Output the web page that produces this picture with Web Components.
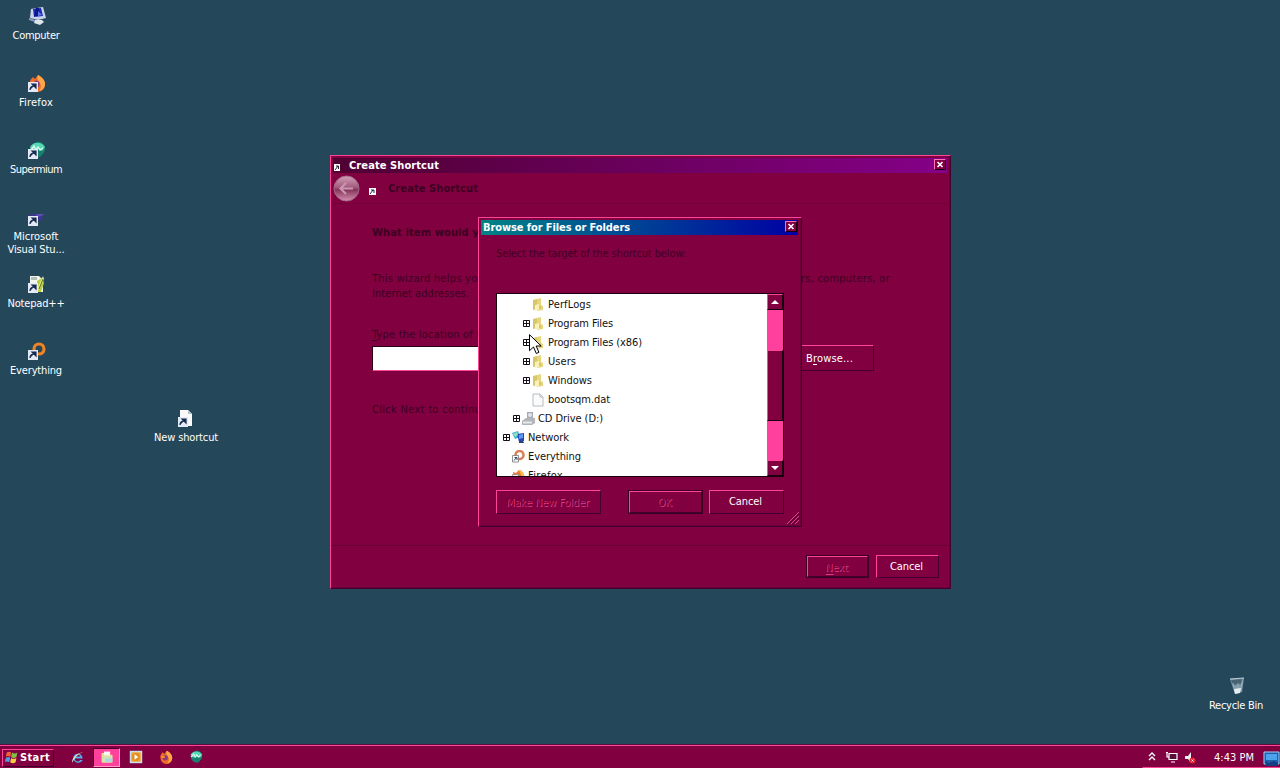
<!DOCTYPE html>
<html lang="en">
<head>
<meta charset="utf-8">
<title>Desktop</title>
<style>
  html, body { margin: 0; width: 1280px; height: 768px; overflow: hidden; }
  body {
    --face: #800040;
    --light: #ff4598;
    --dark: #400030;
    --deep: #18000f;
    font: 11px/13px "DejaVu Sans Condensed", "DejaVu Sans", "Noto Sans", sans-serif;
    font-stretch: condensed;
    color: #fff;
  }
</style>
</head>
<body>
<xp-desktop>
  <xp-shortcut slot="icons" icon="computer" label="Computer" w="47" style="left:0;top:7px"></xp-shortcut>
  <xp-shortcut slot="icons" icon="firefox" link label="Firefox" w="34" style="left:0;top:74px"></xp-shortcut>
  <xp-shortcut slot="icons" icon="supermium" link label="Supermium" w="52" style="left:0;top:141px"></xp-shortcut>
  <xp-shortcut slot="icons" icon="vs" link label="Microsoft|Visual Stu..." w="45|57" style="left:0;top:208px"></xp-shortcut>
  <xp-shortcut slot="icons" icon="notepad" link label="Notepad++" w="57" style="left:0;top:275px"></xp-shortcut>
  <xp-shortcut slot="icons" icon="everything" link label="Everything" w="52" style="left:0;top:342px"></xp-shortcut>
  <xp-shortcut slot="icons" icon="page" link label="New shortcut" w="64" style="left:150px;top:409px"></xp-shortcut>
  <xp-shortcut slot="icons" icon="bin" label="Recycle Bin" w="54" style="left:1200px;top:677px"></xp-shortcut>

  <xp-window slot="windows" caption="Create Shortcut" w="90" glyph
    style="left:330px;top:155px;width:621px;height:434px;--from:#500032;--to:#850088">
    <wizard-page></wizard-page>
  </xp-window>
  <xp-window slot="windows" caption="Browse for Files or Folders" w="147"
    style="left:478px;top:217px;width:324px;height:310px;--from:#008486;--to:#0000a4">
    <browse-page></browse-page>
  </xp-window>
  <xp-cursor slot="windows"></xp-cursor>
  <xp-taskbar slot="bar"></xp-taskbar>
</xp-desktop>

<script>
const folder = '<path d="M1 2l4-1v10l-4 1z" fill="#d8c66a"/><path d="M5 1l4-1v7l2 1v4l-6 1z" fill="#e6d77e"/><path d="M3 7l4-1v6l-4 .5z" fill="#f8f2b8"/><path d="M8 8v3" stroke="#c9b452"/>';
const firefox = '<path d="M5 3l2 2 3-4c4 2 7 5 7 9a7.500 7.500 0 01-15 1c-1-4 1-6 3-8z" fill="#f06b25"/><path d="M10 1c4 2 7 5 7 9 0 4-3 7-6 7 3-4 2-7 0-9-2-3-2-5-1-7z" fill="#ffa648"/><circle cx="8" cy="10" r="3.500" fill="#8a3b7f"/><path d="M3 8c2-1 4-1 5 1-1 1-2 2-5 1z" fill="#ff8c2e"/>';
const supermium = '<path d="M9 1c5-1 8 3 8 7 0 3-2 5-5 8-6 1-9-3-10-7 1-4 3-7 7-8z" fill="#18806f"/><path d="M2 6c3-5 11-6 15 0l-3 4-3-2-3 2-5-1z" fill="#58d7b4"/><path d="M3 9l3-4 2 4 2-3 2 3 3-2" stroke="#e0fff5" stroke-width="1.300" fill="none"/>';

// Every glyph is drawn on an 18 unit grid, except the small tree ones (14).
const GLYPHS = {
  computer: '<path d="M3 2l12-2 3 11-8 2-8-2z" fill="#c9d3ee"/><path d="M5 2l8-1 2 8-9 1z" fill="#1c2cb0"/><path d="M8 1h3l1 8H6z" fill="#0d168c"/><path d="M10 4l4 4-4 1z" fill="#5d7de8"/><path d="M7 13h7l2 2-4 3-6-2z" fill="#dfe3ea"/><path d="M1 11l6 2v2l-6-2z" fill="#8fa0c8"/>',
  firefox, supermium,
  vs: '<path d="M2 6h15l-3 2.500 1 4h-4l-3-2-6 2z" fill="#3d3490"/><path d="M8 6h8l-2 2-5 1z" fill="#5a4fae"/>',
  notepad: '<path d="M2 1h9l4 4v12H2z" fill="#f2f5ea"/><path d="M4 2v3M6 2v3M8 2v3" stroke="#788"/><path d="M9 6l5-3 2 5-3 9H9z" fill="#b5cf3a"/><path d="M15 1l1 3-5 11-2 1 1-4z" fill="#edea9c"/><path d="M15 4l-4 10" stroke="#5a7421"/>',
  everything: '<circle cx="11" cy="7" r="5" fill="none" stroke="#f08322" stroke-width="3.200"/><path d="M8 11l-4 5" stroke="#c85a10" stroke-width="3"/>',
  page: '<path d="M2 1h8l4 4v12H2z" fill="#fafafa"/><path d="M10 1v4h4z" fill="#b8c4cc"/>',
  bin: '<path d="M2 2l14-1-2 14-7 2z" fill="#7f9aa9"/><path d="M3 3l11-1-1 5-8 1z" fill="#486373"/><path d="M5 6l2 9M10 6v9M14 5l-1 9" stroke="#93adb9"/><path d="M6 12l7-1-1 5-5 1z" fill="#e4eef2"/><path d="M2 2l14-1" stroke="#bccdd5"/>',
  ie: '<path d="M14.500 11H5c0 4 5 5 7 2h3c-3 6-12 4-12-3 0-6 11-8 12 1z" fill="#52aeee"/><path d="M6 8.500h6c-1-3-5-3-6 0z" fill="#800040"/><path d="M2 16c-3-5 9-15 15-13-4-1-12 5-15 13z" fill="#e9e6b2"/>',
  explorer: '<path d="M2 4h6l1 2h7v10H2z" fill="#e7dc90"/><path d="M5 2h8v5H5z" fill="#f8f8ee"/><path d="M3 8h13l-1 8H3z" fill="#d3e3b1"/><path d="M7 11h9v4H7z" fill="#a8d4e4"/>',
  player: '<path d="M1 1h16v16H1z" fill="#c8ddea"/><path d="M3 3h12v12H3z" fill="#f1a22d"/><circle cx="9" cy="9" r="5" fill="#e48b16"/><path d="M7 5.500l5 3.500-5 3.500z" fill="#fff"/>',
  flag: '<path d="M3 4q3-2 5 0l-1 5q-3-2-5 0z" fill="#ee6335"/><path d="M9 4q3 2 6 0l-1 5q-3 2-6 0z" fill="#83bf43"/><path d="M2 10q3-2 5 0l-1 5q-3-2-5 0z" fill="#519bdf"/><path d="M8 10q3 2 6 0l-1 5q-3 2-6 0z" fill="#f5cc45"/>',
  up: '<path d="M6 7l3-3 3 3M6 11l3-3 3 3" fill="none" stroke="#fff" stroke-width="1.400"/>',
  lan: '<path d="M6 4.500h8v6H6z" fill="#58103d" stroke="#fff" stroke-width="1.200"/><path d="M4 3v5h2M8 13h4M3 3.500h2" fill="none" stroke="#fff" stroke-width="1.200"/>',
  sound: '<path d="M4 7h3l3-4v11l-3-4H4z" fill="#eee"/><circle cx="11.500" cy="11.500" r="3" fill="#df2434"/><path d="M10.500 10.500l2 2m0-2l-2 2" stroke="#fff"/>',
  screen: '<path d="M2 3h15v12H2z" fill="#205fae" stroke="#a4cef4"/><path d="M4 5h11v6H4z" fill="#4ba3ee"/><path d="M3 12l4 2 5-2 4 2v3H4z" fill="#173d83"/>',
  folder,
  file: '<path d="M1 1h7l3 3v9H1z" fill="#fbfbfb" stroke="#a5adb5" stroke-width=".8"/><path d="M8 1v3h3" fill="none" stroke="#a5adb5" stroke-width=".8"/>',
  cd: '<path d="M5 0h6v7H5z" fill="#a8acb0"/><path d="M0 9l4-3h9v5l-3 2H0z" fill="#b1b4b8"/><path d="M1 9.500h9v2H1z" fill="#e6e8ea"/><circle cx="8" cy="3" r="2" fill="#dfe5ea"/>',
  net: '<path d="M0 2l6-2 2 6-5 2z" fill="#38b1cc"/><path d="M5 3l7-1v8l-5 1z" fill="#2546bd"/><path d="M7 4l4-1v4L7 8z" fill="#5f9cf0"/><path d="M7 10h4l1 2H7z" fill="#2c3f72"/><path d="M1 3l4-2 1 3-3 2z" fill="#8be0c8"/>',
  everythingSm: '<circle cx="7.500" cy="5" r="4" fill="none" stroke="#d9825c" stroke-width="2.600"/><path d="M.5 5.500h6V12h-6z" fill="#fff" stroke="#777" stroke-width=".8"/><path d="M2 10.500L4.500 7.500M2.500 7.500H5V10" stroke="#26446e" fill="none"/>',
  firefoxSm: '<path d="M1 3l3 1 3-3c4 1 6 4 5 8l-3 4H2z" fill="#ef7a38"/><path d="M7 1c4 1 6 4 5 8L9 6z" fill="#f8c050"/><path d="M.5 5.500h6V12h-6z" fill="#f5eef5" stroke="#987" stroke-width=".8"/>'
};
const SMALL = ['folder', 'file', 'cd', 'net', 'everythingSm', 'firefoxSm'];

const link = '<path d="M0 8h10v10H0z" fill="#e4eaf5"/><path d="M2 16c0-3 1-4 4-4M4 10h4v4z" fill="#182b52" stroke="#182b52" stroke-width="1.200"/>';

function glyph(name, linked) {
  const n = SMALL.includes(name) ? 14 : 18;
  return `<svg width="${n}" height="${n}" viewBox="0 0 ${n} ${n}">${GLYPHS[name]}${linked ? link : ''}</svg>`;
}

// One line of text, tracked so that it fills the width in "w".
class FitText extends HTMLElement {
  connectedCallback() {
    this.attachShadow({ mode: 'open' }).innerHTML =
      '<style>:host { display: block; flex: none; width: max-content } span { display: block; white-space: pre }</style>' +
      '<span><slot></slot></span>';
    const w = Number(this.getAttribute('w'));
    if (!w) return;
    const span = this.shadowRoot.querySelector('span');
    const n = this.textContent.length;
    span.style.letterSpacing = (w - span.getBoundingClientRect().width) / n + 'px';
  }
}

class XpDesktop extends HTMLElement {
  connectedCallback() {
    this.attachShadow({ mode: 'open' }).innerHTML = `
      <style>
        :host { display: flex; flex-direction: column; position: relative; width: 1280px; height: 768px; background: #25475a; }
        .space { flex: 1; }
      </style>
      <div class="space"><slot name="icons"></slot><slot name="windows"></slot></div>
      <slot name="bar"></slot>`;
  }
}

class XpShortcut extends HTMLElement {
  connectedCallback() {
    const widths = this.getAttribute('w').split('|');
    const lines = this.getAttribute('label').split('|');
    this.attachShadow({ mode: 'open' }).innerHTML = `
      <style>
        :host { position: absolute; display: flex; flex-direction: column; align-items: center; width: 72px; }
        svg { display: block; margin: 0 0 4px 2px; }
      </style>
      ${glyph(this.getAttribute('icon'), this.hasAttribute('link'))}
      ${lines.map((t, i) => `<fit-text w="${widths[i]}">${t}</fit-text>`).join('')}`;
  }
}

class XpWindow extends HTMLElement {
  connectedCallback() {
    this.attachShadow({ mode: 'open' }).innerHTML = `
      <style>
        :host {
          position: absolute; box-sizing: border-box; display: flex; flex-direction: column;
          background: var(--face); border: 1px solid; border-color: var(--light) var(--dark) var(--dark) var(--light);
          box-shadow: inset -2px -2px 0 -1px #69003a;
        }
        .bar {
          display: flex; align-items: center; height: 15px; margin: 2px 3px 0 2px; padding: 0 1px 0 2px;
          background: linear-gradient(90deg, var(--from), var(--to)); font-weight: bold;
        }
        .mini { margin: 4px 9px 0 -1px; display: block; }
        .close {
          box-sizing: border-box; width: 12px; height: 11px; margin: 0 0 2px auto; background: var(--face);
          border: 1px solid; border-color: #ff70b4 var(--deep) var(--deep) #ff70b4;
        }
        .close svg { display: block; }
        .content { flex: 1; display: flex; }
      </style>
      <div class="bar">
        ${this.hasAttribute('glyph') ? '<svg class="mini" width="6" height="7"><path d="M0 0h6v7H0z" fill="#fff"/><path d="M1 6l3-4M2 2h2.500v3" stroke="#223" fill="none"/></svg>' : ''}
        <fit-text w="${this.getAttribute('w')}">${this.getAttribute('caption')}</fit-text>
        <div class="close"><svg width="10" height="9"><path d="M2.500 2l5 5m0-5l-5 5" stroke="#fff" stroke-width="1.600"/></svg></div>
      </div>
      <div class="content"><slot></slot></div>`;
  }
}

class XpButton extends HTMLElement {
  connectedCallback() {
    this.attachShadow({ mode: 'open' }).innerHTML = `
      <style>
        :host {
          box-sizing: border-box; flex: none; display: flex; align-items: center; justify-content: center; padding-right: 2px;
          border: 1px solid; border-color: var(--light) var(--dark) var(--dark) var(--light);
        }
        :host([disabled]) { color: #700039; text-shadow: 1px 1px 0 #e33a84; padding-top: 1px; }
        :host([default]) { outline: 1px solid #3a0020; outline-offset: 0; }
      </style>
      <slot></slot>`;
  }
}

class WizardPage extends HTMLElement {
  connectedCallback() {
    this.attachShadow({ mode: 'open' }).innerHTML = `
      <style>
        :host { display: flex; flex-direction: column; flex: 1; color: #3c0020; }
        header { display: flex; align-items: center; height: 29px; padding: 1px 0 0 2px; border-bottom: 1px solid #740039; font-weight: bold; }
        .back { margin-right: 9px; }
        .mini { margin: 5px 12px 0 0; }
        main { flex: 1; padding: 21px 0 0 41px; line-height: 15px; }
        b { display: block; margin-bottom: 31px; }
        .type { margin-top: 26px; }
        .row { display: flex; align-items: center; height: 26px; margin: 3px 0 31px; }
        .field { box-sizing: border-box; width: 411px; height: 25px; background: #fff; border: 1px solid #28001a; border-color: #28001a var(--light) var(--light) #28001a; }
        .row xp-button { width: 84px; height: 26px; padding-right: 5px; margin-left: 7px; color: #fff; }
        u { text-underline-offset: 2px; }
        footer { display: flex; justify-content: flex-end; align-items: flex-start; gap: 8px; height: 33px; padding: 9px 11px 0 0; border-top: 1px solid #680036; }
        footer xp-button { width: 63px; height: 23px; color: #fff; }
        footer xp-button[disabled] { width: 61px; height: 21px; margin-top: 1px; color: #700039; }
      </style>
      <header>
        <svg class="back" width="27" height="27" viewBox="0 0 27 27">
          <defs><linearGradient id="g" x2="0" y2="1"><stop stop-color="#d1a0b8"/><stop offset=".45" stop-color="#a45a7d"/><stop offset=".55" stop-color="#853459"/><stop offset="1" stop-color="#d391b1"/></linearGradient></defs>
          <circle cx="13.500" cy="13.500" r="12.500" fill="url(#g)" stroke="#a56b88"/>
          <path d="M20 13.500H8m5-5.500l-5.500 5.500 5.500 5.500" fill="none" stroke="#c896b0" stroke-width="2.200"/>
        </svg>
        <svg class="mini" width="7" height="7"><path d="M0 0h7v7H0z" fill="#fff"/><path d="M1 6l3-4M2 2h3v3" stroke="#223" fill="none"/></svg>
        <fit-text w="90">Create Shortcut</fit-text>
      </header>
      <main>
        <b><fit-text w="288">What item would you like to create a shortcut for?</fit-text></b>
        <fit-text w="518">This wizard helps you to create shortcuts to local or network programs, files, folders, computers, or</fit-text>
        <fit-text w="97">Internet addresses.</fit-text>
        <fit-text class="type" w="151"><u>T</u>ype the location of the item:</fit-text>
        <div class="row"><div class="field"></div><xp-button><fit-text w="47">B<u>r</u>owse...</fit-text></xp-button></div>
        <fit-text w="119">Click Next to continue.</fit-text>
      </main>
      <footer>
        <xp-button disabled default><fit-text w="23"><u>N</u>ext</fit-text></xp-button>
        <xp-button><fit-text w="33">Cancel</fit-text></xp-button>
      </footer>`;
  }
}

class TreeRow extends HTMLElement {
  connectedCallback() {
    const level = Number(this.getAttribute('level'));
    this.attachShadow({ mode: 'open' }).innerHTML = `
      <style>
        :host { display: flex; align-items: center; height: 19px; padding-left: ${6 + level * 10}px; }
        .box { width: 7px; height: 7px; margin-right: 2px; }
        .icon { width: 16px; height: 14px; }
        svg { display: block; }
      </style>
      <div class="box">${this.hasAttribute('plus') ? '<svg width="7" height="7"><path d="M.5.5h6v6h-6zM0 3.500h7M3.500 0v7" fill="none" stroke="#181018"/></svg>' : ''}</div>
      <div class="icon">${glyph(this.getAttribute('icon'))}</div>
      <fit-text w="${this.getAttribute('w')}">${this.getAttribute('label')}</fit-text>`;
  }
}

class BrowsePage extends HTMLElement {
  connectedCallback() {
    this.attachShadow({ mode: 'open' }).innerHTML = `
      <style>
        :host { display: flex; flex-direction: column; flex: 1; padding: 12px 0 0 17px; color: #400024; }
        .list { box-sizing: border-box; display: flex; width: 288px; height: 184px; margin-top: 33px; background: #fff; color: #111; border: 1px solid #18000f; }
        .rows { box-sizing: border-box; flex: 1; height: 182px; padding-top: 1px; overflow: hidden; }
        .scroll { display: flex; flex-direction: column; width: 16px; background: #ff409c; }
        .key, .thumb { box-sizing: border-box; background: var(--face); border: 1px solid; border-color: var(--light) var(--deep) var(--deep) var(--light); }
        .key { height: 16px; display: flex; align-items: center; justify-content: center; }
        .thumb { height: 71px; margin: 40px 0 auto; }
        .buttons { display: flex; align-items: center; margin-top: 12px; height: 25px; color: #fff; }
        .grip { display: block; margin: -2px 1px 0 auto; }
      </style>
      <fit-text w="190">Select the target of the shortcut below:</fit-text>
      <div class="list">
        <div class="rows">
          <tree-row level="2" icon="folder" label="PerfLogs" w="43"></tree-row>
          <tree-row level="2" plus icon="folder" label="Program Files" w="65"></tree-row>
          <tree-row level="2" plus icon="folder" label="Program Files (x86)" w="94"></tree-row>
          <tree-row level="2" plus icon="folder" label="Users" w="28"></tree-row>
          <tree-row level="2" plus icon="folder" label="Windows" w="44"></tree-row>
          <tree-row level="2" icon="file" label="bootsqm.dat" w="62"></tree-row>
          <tree-row level="1" plus icon="cd" label="CD Drive (D:)" w="65"></tree-row>
          <tree-row level="0" plus icon="net" label="Network" w="41"></tree-row>
          <tree-row level="0" icon="everythingSm" label="Everything" w="53"></tree-row>
          <tree-row level="0" icon="firefoxSm" label="Firefox" w="35"></tree-row>
        </div>
        <div class="scroll">
          <div class="key"><svg width="8" height="4"><path d="M0 4l4-4 4 4z" fill="#fff"/></svg></div>
          <div class="thumb"></div>
          <div class="key"><svg width="8" height="4"><path d="M0 0h8L4 4z" fill="#fff"/></svg></div>
        </div>
      </div>
      <div class="buttons">
        <xp-button disabled style="width:105px;height:24px"><fit-text w="83">Make New Folder</fit-text></xp-button>
        <xp-button disabled default style="width:73px;height:22px;margin-left:28px"><fit-text w="14">OK</fit-text></xp-button>
        <xp-button style="width:75px;height:24px;margin-left:7px"><fit-text w="33">Cancel</fit-text></xp-button>
      </div>
      <svg class="grip" width="13" height="13"><path d="M0 12L12 0M4 12l8-8M8 12l4-4" stroke="#e0488c"/><path d="M1.500 12.500l11-11M5.500 12.500l7-7" stroke="#4a0028"/></svg>`;
  }
}

class XpCursor extends HTMLElement {
  connectedCallback() {
    this.attachShadow({ mode: 'open' }).innerHTML = `
      <style>:host { position: absolute; left: 529px; top: 334px; } svg { display: block; }</style>
      <svg width="14" height="22"><path d="M.5.700v16l4-3.700 2.800 6.500 2.600-1.200L7.200 12h5z" fill="#fff" stroke="#000"/></svg>`;
  }
}

class XpTaskbar extends HTMLElement {
  connectedCallback() {
    this.attachShadow({ mode: 'open' }).innerHTML = `
      <style>
        :host { box-sizing: border-box; display: flex; align-items: center; height: 24px; background: var(--face); border-top: 1px solid #58103a; box-shadow: inset 0 1px var(--light); padding: 2px 0 0 2px; }
        svg { display: block; flex: none; }
        .start { box-sizing: border-box; display: flex; align-items: center; width: 52px; height: 18px; padding-bottom: 1px; border: 1px solid; border-color: var(--light) var(--dark) var(--dark) var(--light); font-weight: bold; }
        .start svg { width: 16px; margin-left: 1px; }
        .quick { display: flex; align-items: center; margin-left: 12px; }
        .quick div { box-sizing: border-box; width: 30px; height: 19px; display: flex; justify-content: center; align-items: center; padding-bottom: 1px; }
        .quick svg { width: 14px; height: 14px; }
        .quick .on { width: 27px; margin: 0 1px 0 3px; background: #ff409c; border: 1px solid; border-color: #4c0028 #ff9cc8 #ff9cc8 #4c0028; }
        .tray { box-sizing: border-box; display: flex; align-items: center; height: 20px; margin-left: auto; border: 1px solid; border-color: transparent #400028 var(--light) transparent; border-right: 0; }
        .tray svg:first-child { margin-right: 2px; }
        .tray fit-text { margin: 0 8px 1px 15px; }
      </style>
      <div class="start">${glyph('flag')}<fit-text w="30">Start</fit-text></div>
      <div class="quick">
        <div style="width:24px">${glyph('ie')}</div><div class="on">${glyph('explorer')}</div>
        <div>${glyph('player')}</div><div>${glyph('firefox')}</div><div>${glyph('supermium')}</div>
      </div>
      <div class="tray">${glyph('up')}${glyph('lan')}${glyph('sound')}<fit-text w="40">4:43 PM</fit-text>${glyph('screen')}</div>`;
  }
}

customElements.define('fit-text', FitText);
customElements.define('xp-button', XpButton);
customElements.define('tree-row', TreeRow);
customElements.define('xp-desktop', XpDesktop);
customElements.define('xp-shortcut', XpShortcut);
customElements.define('xp-window', XpWindow);
customElements.define('wizard-page', WizardPage);
customElements.define('browse-page', BrowsePage);
customElements.define('xp-cursor', XpCursor);
customElements.define('xp-taskbar', XpTaskbar);
</script>
</body>
</html>
